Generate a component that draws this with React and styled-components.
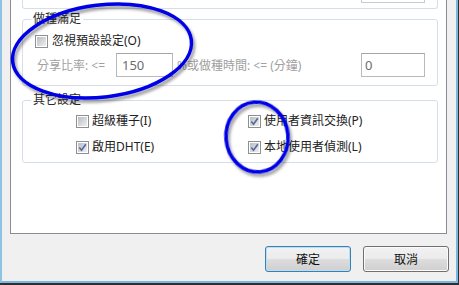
import React from "react";
import styled, { createGlobalStyle } from "styled-components";

const GlobalStyle = createGlobalStyle`
  html, body {
    margin: 0;
    padding: 0;
    background: #f0f0f0;
  }
  body {
    font-family: "Noto Sans", "Noto Sans CJK TC", sans-serif;
    font-size: 12px;
  }
  #root {
    width: 459px;
    height: 285px;
    overflow: hidden;
  }
`;

const Outer = styled.div`
  position: relative;
  width: 459px;
  height: 285px;
  box-sizing: border-box;
  border-right: 1px solid #2f2f2f;
  border-bottom: 2px solid #2f2f2f;
`;

const Window = styled.div`
  height: 100%;
  box-sizing: border-box;
  background: #f0f0f0;
  border-left: 2px solid #8fc3e6;
  border-right: 2px solid #79b7e2;
  border-bottom: 2px solid #79b7e2;
  padding: 0 7px 0 8px;
  display: flex;
  flex-direction: column;
`;

const Panel = styled.div`
  width: 437px;
  height: 234px;
  box-sizing: border-box;
  background: #fff;
  border: 1px solid #898c95;
  border-top: none;
  padding-left: 11px;
  display: flex;
  flex-direction: column;
`;

const CutGroup = styled.div`
  width: 416px;
  height: 9px;
  box-sizing: border-box;
  border: 1px solid #d5dfe5;
  border-top: none;
  border-radius: 0 0 3px 3px;
  padding-left: 338px;
`;

const CutInput = styled.div`
  width: 64px;
  height: 3px;
  box-sizing: border-box;
  border: 1px solid #c9cbcf;
  border-top: none;
`;

const Group = styled.div`
  position: relative;
  width: 416px;
  box-sizing: border-box;
  margin-top: ${(p) => p.$gap}px;
  border: 1px solid #d5dfe5;
  border-radius: 3px;
`;

const Legend = styled.span`
  position: absolute;
  left: 8px;
  top: -8px;
  padding: 0 2px;
  background: #fff;
  line-height: 14px;
  color: #2a2a2a;
`;

const LimitBody = styled.div`
  display: flex;
  flex-direction: column;
  gap: 5px;
  padding: 14px 0 8px 12px;
`;

const OtherBody = styled.div`
  display: grid;
  grid-template-columns: 172px auto;
  grid-auto-rows: 14px;
  row-gap: 12px;
  padding: 13px 0 8px 53px;
`;

const CheckRow = styled.label`
  display: flex;
  align-items: center;
  height: 14px;
  gap: ${(p) => p.$gap || 3}px;
  color: #222;
  line-height: 14px;
  white-space: nowrap;
`;

const Box = styled.span`
  flex: none;
  width: 13px;
  height: 13px;
  box-sizing: border-box;
  border: 1px solid #8e8f8f;
  padding: 1px;
  background: linear-gradient(135deg, #b9bdc3, #eeeff0) content-box, #fff;
  display: flex;
  align-items: center;
  justify-content: center;
`;

const FieldRow = styled.div`
  display: flex;
  align-items: center;
  height: 24px;
  margin-left: 2px;
`;

const Dim = styled.span`
  width: ${(p) => p.$w}px;
  margin-left: ${(p) => p.$ml || 0}px;
  color: #a0a0a0;
  white-space: nowrap;
`;

const TextBox = styled.div`
  width: ${(p) => p.$w}px;
  height: 24px;
  box-sizing: border-box;
  border: 1px solid #b8b9bd;
  border-top-color: #a3a5aa;
  background: #fff;
  padding-left: ${(p) => p.$pad}px;
  display: flex;
  align-items: center;
  color: #6d6d6d;
  font-size: 13px;
`;

const Footer = styled.div`
  display: flex;
  justify-content: flex-end;
  gap: 12px;
  padding-top: 12px;
`;

const Button = styled.button`
  width: 86px;
  height: 26px;
  padding: 0;
  border: 1px solid ${(p) => (p.$primary ? "#3c7fb1" : "#707070")};
  border-radius: 3px;
  background: linear-gradient(#f2f2f2 0%, #ebebeb 48%, #dddddd 52%, #cfcfcf 100%);
  box-shadow: inset 0 0 0 1px ${(p) => (p.$primary ? "#b4e1f8" : "#fbfbfb")};
  font-family: "Noto Sans", "Noto Sans CJK TC", sans-serif;
  font-size: 12px;
  color: #111;
`;

const Overlay = styled.svg`
  position: absolute;
  left: 0;
  top: 0;
  pointer-events: none;
`;

function Check({ checked, label, gap }) {
  return (
    <CheckRow $gap={gap}>
      <Box>
        {checked && (
          <svg width="9" height="9" viewBox="0 0 9 9">
            <path d="M1.3 4.6 L3.5 7.2 L7.8 1.2" fill="none" stroke="#56679a" strokeWidth="1.6" />
          </svg>
        )}
      </Box>
      {label}
    </CheckRow>
  );
}

export default function App() {
  return (
    <Outer>
      <GlobalStyle />
      <Window>
        <Panel>
          <CutGroup>
            <CutInput />
          </CutGroup>
          <Group $gap={10}>
            <Legend>做種滿足</Legend>
            <LimitBody>
              <Check label="忽視預設設定(O)" gap={4} />
              <FieldRow>
                <Dim $w={79}>分享比率: &lt;=</Dim>
                <TextBox $w={57} $pad={5}>150</TextBox>
                <Dim $w={184} $ml={4}>%或做種時間: &lt;= (分鐘)</Dim>
                <TextBox $w={64} $pad={3}>0</TextBox>
              </FieldRow>
            </LimitBody>
          </Group>
          <Group $gap={14}>
            <Legend>其它設定</Legend>
            <OtherBody>
              <Check label="超級種子(I)" />
              <Check checked label="使用者資訊交換(P)" />
              <Check checked label="啟用DHT(E)" />
              <Check checked label="本地使用者偵測(L)" />
            </OtherBody>
          </Group>
        </Panel>
        <Footer>
          <Button $primary>確定</Button>
          <Button>取消</Button>
        </Footer>
      </Window>
      <Overlay width="459" height="285" viewBox="0 0 459 285">
        <defs>
          <filter id="inkShadow" x="-20%" y="-20%" width="140%" height="140%">
            <feGaussianBlur in="SourceAlpha" stdDeviation="1.6" />
            <feOffset dx="2" dy="3" result="off" />
            <feComponentTransfer>
              <feFuncA type="linear" slope="0.4" />
            </feComponentTransfer>
            <feMerge>
              <feMergeNode />
              <feMergeNode in="SourceGraphic" />
            </feMerge>
          </filter>
        </defs>
        <g fill="none" stroke="#0000e6" strokeWidth="3.5" filter="url(#inkShadow)">
          <ellipse cx="102" cy="51" rx="90" ry="46" transform="rotate(-7 102 51)" />
          <ellipse cx="257" cy="137" rx="31" ry="35" transform="rotate(-5 257 137)" />
        </g>
      </Overlay>
    </Outer>
  );
}
